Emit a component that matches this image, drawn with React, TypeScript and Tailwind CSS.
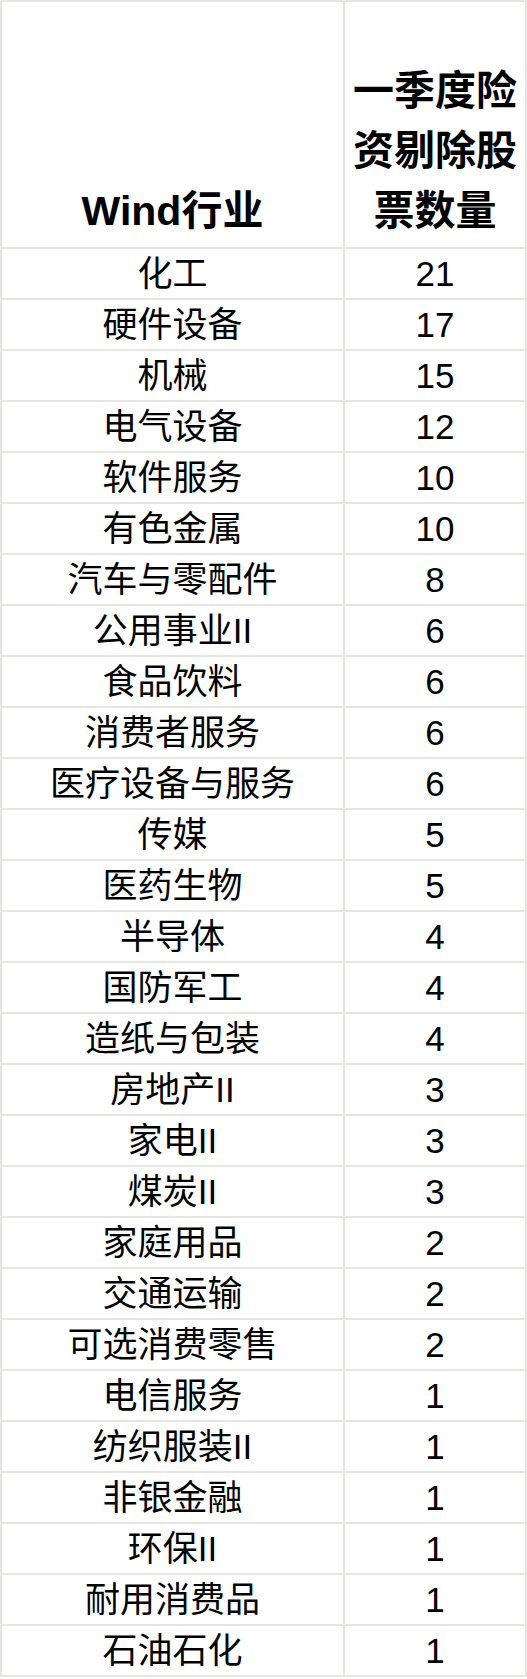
import React from 'react';

const rows: [string, number][] = [
  ['化工', 21],
  ['硬件设备', 17],
  ['机械', 15],
  ['电气设备', 12],
  ['软件服务', 10],
  ['有色金属', 10],
  ['汽车与零配件', 8],
  ['公用事业II', 6],
  ['食品饮料', 6],
  ['消费者服务', 6],
  ['医疗设备与服务', 6],
  ['传媒', 5],
  ['医药生物', 5],
  ['半导体', 4],
  ['国防军工', 4],
  ['造纸与包装', 4],
  ['房地产II', 3],
  ['家电II', 3],
  ['煤炭II', 3],
  ['家庭用品', 2],
  ['交通运输', 2],
  ['可选消费零售', 2],
  ['电信服务', 1],
  ['纺织服装II', 1],
  ['非银金融', 1],
  ['环保II', 1],
  ['耐用消费品', 1],
  ['石油石化', 1],
];

const cell = 'border-r-2 border-b-2 border-[#e6e6e3] flex items-center justify-center';

export default function App() {
  return (
    <div
      className="w-[527px] h-[1679px] bg-white text-black"
      style={{ fontFamily: '"Liberation Sans", "Noto Sans CJK SC", sans-serif' }}
    >
      <div className="grid grid-cols-[343px_182px] border-l-2 border-t-2 border-[#e6e6e3] w-[527px]">
        {/* Header */}
        <div className={`${cell} h-[247px] !items-end pb-[6px] text-[41px] font-bold leading-[60px]`}>
          Wind行业
        </div>
        <div className={`${cell} h-[247px] !items-end pb-[6px] text-[41px] font-bold leading-[60px] text-center`}>
          <div>
            一季度险
            <br />
            资剔除股
            <br />
            票数量
          </div>
        </div>

        {/* Rows */}
        {rows.map(([name, count]) => (
          <React.Fragment key={name}>
            <div className={`${cell} h-[51px] text-[35px] leading-none`}>{name}</div>
            <div className={`${cell} h-[51px] text-[35px] leading-none`}>{count}</div>
          </React.Fragment>
        ))}
      </div>
    </div>
  );
}
